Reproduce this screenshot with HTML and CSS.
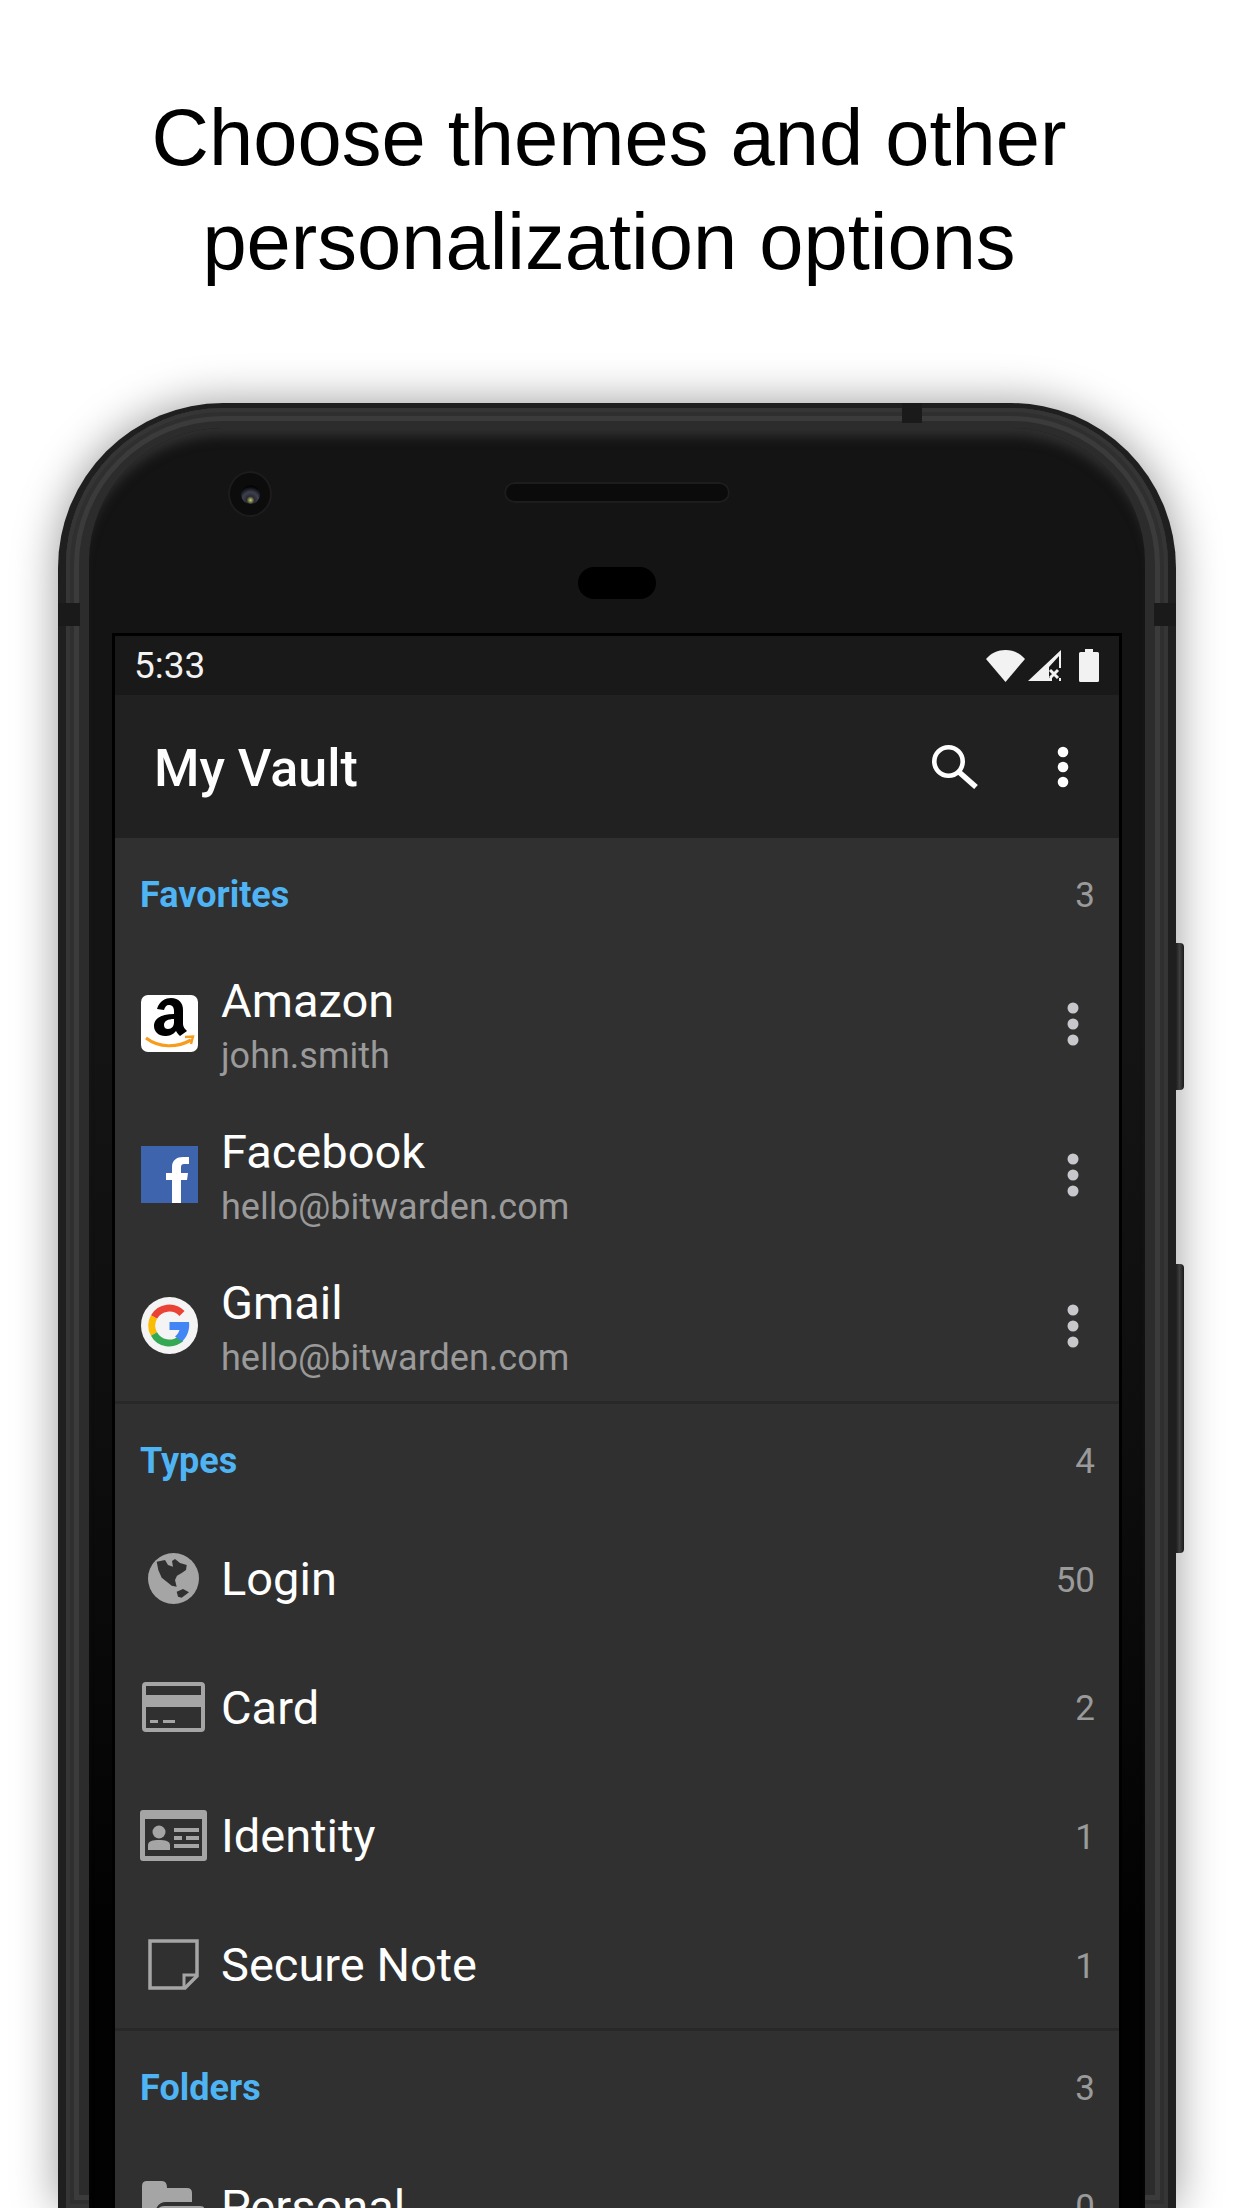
FILE: index.html
```html
<!DOCTYPE html>
<html lang="en">

<head>
    <meta charset="UTF-8">
    <title>My Vault</title>
    <link rel="stylesheet" href="styles.css">
</head>

<body>
    <h1 class="headline">Choose themes and other<br>personalization options</h1>

    <div class="phone">
        <span class="side-btn side-btn-power"></span>
        <span class="side-btn side-btn-volume"></span>
        <span class="notch notch-left"></span>
        <span class="notch notch-right"></span>
        <span class="notch notch-top"></span>
        <div class="phone-band">
            <div class="phone-face">
                <span class="camera"><span class="lens"></span></span>
                <div class="face-top">
                    <span class="speaker"></span>
                    <span class="sensor"></span>
                </div>

                <div class="screen">
                    <div class="status-bar">
                        <span class="clock">5:33</span>
                        <svg class="st-wifi" viewBox="0 0 39 32"><path d="M0 9C5 3 12 0 19.5 0S34 3 39 9L19.5 32z" fill="#f2f2f2"/></svg>
                        <svg class="st-signal" viewBox="0 0 33 31"><path d="M33 0V18H31V6L21 17V31H0z" fill="#f2f2f2"/><path d="M22 20L30 28M30 20L22 28" stroke="#f2f2f2" stroke-width="3"/><path d="M21 29.5H24M31 29.5H33" stroke="#f2f2f2" stroke-width="3"/></svg>
                        <svg class="st-battery" viewBox="0 0 20 33"><path d="M6 0H14V3H18.5Q20 3 20 4.5V31.5Q20 33 18.5 33H1.5Q0 33 0 31.5V4.5Q0 3 1.5 3H6z" fill="#f2f2f2"/></svg>
                    </div>

                    <div class="app-bar">
                        <span class="app-title">My Vault</span>
                        <svg class="search-icon" viewBox="0 0 46 44"><circle cx="16.5" cy="16.5" r="14.2" fill="none" stroke="#fff" stroke-width="4.6"/><path d="M27 27L44 42" stroke="#fff" stroke-width="5.5"/></svg>
                        <svg class="more-icon" viewBox="0 0 12 42"><circle cx="6" cy="6" r="5.3" fill="#fff"/><circle cx="6" cy="21" r="5.3" fill="#fff"/><circle cx="6" cy="36" r="5.3" fill="#fff"/></svg>
                    </div>

                    <div class="list">
                        <section class="group">
                            <div class="group-head"><span class="group-name">Favorites</span><span class="count">3</span></div>
                            <div class="cipher">
                                <svg class="site-icon" viewBox="0 0 57 57">
                                    <rect width="57" height="57" rx="7" fill="#fff"/>
                                    <path fill-rule="evenodd" d="M16 14C18 6 25 3 30 3C38 3 42 8 42 15V29C42 32 44 34 46 36L39 41C37 39 36 38 35 36C32 40 28 41 24 41C18 41 13 37 13 31C13 23 21 19 33 19V16C33 12 31 10 28 10C25 10 24 12 23 15zM33 24C27 24 23 26 23 30C23 33 25 34 27 34C31 34 33 31 33 27z" fill="#000"/>
                                    <path d="M5 43C18 53 36 53 50 45" fill="none" stroke="#f79c1d" stroke-width="3.2"/>
                                    <path d="M44 42L52 41.5L50 49" fill="none" stroke="#f79c1d" stroke-width="2.4"/>
                                </svg>
                                <div class="cipher-text"><span class="cipher-name">Amazon</span><span class="cipher-sub">john.smith</span></div>
                                <svg class="row-more" viewBox="0 0 12 44"><circle cx="6" cy="6" r="5.5"/><circle cx="6" cy="22" r="5.5"/><circle cx="6" cy="38" r="5.5"/></svg>
                            </div>
                            <div class="cipher">
                                <svg class="site-icon" viewBox="0 0 57 57">
                                    <rect width="57" height="57" fill="#3e64ae"/>
                                    <path d="M31 57V34H25V27H31V21C31 14 36 11 42 11H48V18H43C41 18 40 19 40 21V27H47L46 34H40V57z" fill="#fff"/>
                                </svg>
                                <div class="cipher-text"><span class="cipher-name">Facebook</span><span class="cipher-sub">hello@bitwarden.com</span></div>
                                <svg class="row-more" viewBox="0 0 12 44"><circle cx="6" cy="6" r="5.5"/><circle cx="6" cy="22" r="5.5"/><circle cx="6" cy="38" r="5.5"/></svg>
                            </div>
                            <div class="cipher">
                                <svg class="site-icon" viewBox="0 0 57 57">
                                    <circle cx="28.5" cy="28.5" r="28.5" fill="#f4f4f4"/>
                                    <path d="M41 16.5A17.5 17.5 0 0 0 13 20" fill="none" stroke="#ea4335" stroke-width="7"/>
                                    <path d="M13 20A17.5 17.5 0 0 0 13 37" fill="none" stroke="#fbbc05" stroke-width="7"/>
                                    <path d="M13 37A17.5 17.5 0 0 0 40 41.5" fill="none" stroke="#34a853" stroke-width="7"/>
                                    <path d="M48 25H28.5V33H38.5C37.5 36 36 38 34 39.5L41 44.5C46 40 49 33 48 25z" fill="#4285f4"/>
                                </svg>
                                <div class="cipher-text"><span class="cipher-name">Gmail</span><span class="cipher-sub">hello@bitwarden.com</span></div>
                                <svg class="row-more" viewBox="0 0 12 44"><circle cx="6" cy="6" r="5.5"/><circle cx="6" cy="22" r="5.5"/><circle cx="6" cy="38" r="5.5"/></svg>
                            </div>
                        </section>

                        <section class="group">
                            <div class="group-head"><span class="group-name">Types</span><span class="count">4</span></div>
                            <div class="type-row">
                                <div class="type-icon">
                                    <svg class="ic-globe" viewBox="0 0 51 51">
                                        <circle cx="25.5" cy="25.5" r="25.5" fill="#a5a5a5"/>
                                        <path d="M8.7 8.7L17 7L20 12L25 13.7L24 8L27 6L32 10L38.7 12L38 17L33.7 20L29 22.7L27 27L28.7 33.7L23.7 32.7L18.7 28.7L13.7 24.7L10.3 17z" fill="#303030"/>
                                        <path d="M28.7 38.7L35 36L41 39.3L33.7 44.7L30 43.7z" fill="#303030"/>
                                    </svg>
                                </div>
                                <span class="type-name">Login</span><span class="count">50</span>
                            </div>
                            <div class="type-row">
                                <div class="type-icon">
                                    <svg class="ic-card" viewBox="0 0 63 50">
                                        <path fill-rule="evenodd" d="M4 0H59Q63 0 63 4V46Q63 50 59 50H4Q0 50 0 46V4Q0 0 4 0zM4 4V13H59V4zM4 25V46H59V25z" fill="#a5a5a5"/>
                                        <path d="M8 38H16V41H8zM21 38H33V41H21z" fill="#a5a5a5"/>
                                    </svg>
                                </div>
                                <span class="type-name">Card</span><span class="count">2</span>
                            </div>
                            <div class="type-row">
                                <div class="type-icon">
                                    <svg class="ic-identity" viewBox="0 0 67 51">
                                        <path fill-rule="evenodd" d="M3 0H64Q67 0 67 3V48Q67 51 64 51H3Q0 51 0 48V3Q0 0 3 0zM5 9V46H62V9z" fill="#a5a5a5"/>
                                        <circle cx="19" cy="22" r="6.5" fill="#a5a5a5"/>
                                        <path d="M8 40V35C8 31 13 30 19 30S30 31 30 35V40z" fill="#a5a5a5"/>
                                        <path d="M34 18H59V22H34zM34 26H42V30H34zM46 26H59V30H46zM34 34H59V38H34z" fill="#a5a5a5"/>
                                    </svg>
                                </div>
                                <span class="type-name">Identity</span><span class="count">1</span>
                            </div>
                            <div class="type-row">
                                <div class="type-icon">
                                    <svg class="ic-note" viewBox="0 0 51 51">
                                        <path d="M2 2H49V37L37 49H2z" fill="none" stroke="#a5a5a5" stroke-width="3.5"/>
                                        <path d="M36 48V36H48" fill="none" stroke="#a5a5a5" stroke-width="3"/>
                                    </svg>
                                </div>
                                <span class="type-name">Secure Note</span><span class="count">1</span>
                            </div>
                        </section>

                        <section class="group">
                            <div class="group-head"><span class="group-name">Folders</span><span class="count">3</span></div>
                            <div class="type-row">
                                <div class="type-icon">
                                    <svg class="ic-folder" viewBox="0 0 62 50">
                                        <path d="M5 0H20Q25 0 25 7H45Q50 7 50 12V21H24Q18 21 15 26L9 42H4Q0 42 0 38V5Q0 0 5 0z" fill="#a5a5a5"/>
                                        <path d="M22 25H58Q62 25 62 27L54 46Q53 50 49 50H8Q4 50 6 46L14 30Q17 25 22 25z" fill="#a5a5a5"/>
                                    </svg>
                                </div>
                                <span class="type-name">Personal</span><span class="count">0</span>
                            </div>
                        </section>
                    </div>
                </div>
            </div>
        </div>
    </div>
</body>

</html>
```

FILE: styles.css
```css
html,
body {
    margin: 0;
    padding: 0;
    height: 2208px;
    overflow: hidden;
    background: #fff;
}

body {
    font-family: Roboto, "Noto Sans", sans-serif;
}

.headline {
    margin: 0;
    height: 403px;
    padding: 86px 24px 0 0;
    box-sizing: border-box;
    font-family: "Liberation Sans", Arial, sans-serif;
    font-size: 79.5px;
    font-weight: 400;
    line-height: 104px;
    text-align: center;
    color: #000;
}

/* phone body */
.phone {
    position: relative;
    width: 1118px;
    height: 1805px;
    margin-left: 58px;
    padding: 5px 8px 0;
    box-sizing: border-box;
    border-radius: 165px 165px 0 0;
    background: #1f1f1f;
    box-shadow: 0 0 45px rgba(0, 0, 0, 0.4);
}

.phone-band {
    height: 100%;
    padding: 20px 23px 0;
    box-sizing: border-box;
    border-radius: 157px 157px 0 0;
    background: #2c2c2c;
    box-shadow: inset 0 0 0 4px #353535, inset 0 0 0 8px #2f2f2f, inset 0 0 0 13px #3b3b3b;
}

.phone-face {
    position: relative;
    height: 100%;
    display: flex;
    flex-direction: column;
    border-radius: 134px 134px 0 0;
    background: linear-gradient(#141414 600px, #0e0e0e 1000px, #020202 1500px);
    box-shadow: inset 0 16px 12px -8px #303030;
}

.side-btn {
    position: absolute;
    right: -8px;
    width: 8px;
    background: linear-gradient(90deg, #1f1f1f, #3f3f3f 45%, #1a1a1a);
    border-radius: 0 4px 4px 0;
}

.side-btn-power {
    top: 540px;
    height: 147px;
}

.side-btn-volume {
    top: 861px;
    height: 289px;
}

.notch {
    position: absolute;
    background: #1a1a1a;
}

.notch-left {
    left: 0;
    top: 200px;
    width: 22px;
    height: 23px;
}

.notch-right {
    right: 0;
    top: 200px;
    width: 22px;
    height: 23px;
}

.notch-top {
    left: 844px;
    top: 0;
    width: 20px;
    height: 20px;
}

.camera {
    position: absolute;
    left: 141px;
    top: 45px;
    width: 40px;
    height: 42px;
    border-radius: 50%;
    background: #0c0c0c;
    box-shadow: 0 0 0 2px #1c1c1c;
    display: flex;
    align-items: center;
    justify-content: center;
}

.lens {
    width: 19px;
    height: 19px;
    border-radius: 50%;
    background: radial-gradient(circle at 50% 80%, #c9cf6a 0, #2a2a30 22%, #3d4050 45%, #050505 75%);
}

.face-top {
    height: 205px;
    flex: none;
    padding-top: 54px;
    box-sizing: border-box;
    display: flex;
    flex-direction: column;
    align-items: center;
}

.speaker {
    width: 226px;
    height: 21px;
    box-sizing: border-box;
    border-radius: 11px;
    background: #0b0b0b;
    box-shadow: inset 0 0 0 2px #1d1d1d;
}

.sensor {
    width: 78px;
    height: 32px;
    margin-top: 64px;
    border-radius: 16px;
    background: #000;
}

/* app screen */
.screen {
    flex: 1;
    min-height: 0;
    margin: 0 23px;
    overflow: hidden;
    border: 3px solid #000;
    border-bottom: 0;
    background: #303030;
}

.status-bar {
    height: 59px;
    padding: 0 20px 0 19px;
    display: flex;
    align-items: center;
    background: #191919;
}

.clock {
    flex: 1;
    font-size: 37px;
    color: #f2f2f2;
}

.st-wifi {
    width: 39px;
    height: 32px;
}

.st-signal {
    width: 33px;
    height: 31px;
    margin-left: 3px;
}

.st-battery {
    width: 20px;
    height: 33px;
    margin-left: 18px;
}

.app-bar {
    height: 143px;
    padding: 0 50px 0 39px;
    display: flex;
    align-items: center;
    background: #212121;
}

.app-title {
    flex: 1;
    padding-top: 4px;
    font-size: 52px;
    font-weight: 500;
    color: #fff;
}

.search-icon {
    width: 46px;
    height: 44px;
}

.more-icon {
    width: 12px;
    height: 42px;
    margin-left: 79px;
}

.group {
    border-bottom: 3px solid #282828;
}

.group-head {
    height: 110px;
    padding: 4px 24px 0 25px;
    box-sizing: border-box;
    display: flex;
    align-items: center;
    justify-content: space-between;
}

.group-name {
    font-size: 36px;
    font-weight: 700;
    color: #4fb4f4;
}

.count {
    font-size: 35px;
    color: #9a9a9a;
}

.cipher {
    height: 151px;
    padding: 0 25px 0 26px;
    display: flex;
    align-items: center;
}

.site-icon {
    width: 57px;
    height: 57px;
    flex: none;
}

.cipher-text {
    flex: 1;
    margin-left: 23px;
    padding-top: 8px;
    display: flex;
    flex-direction: column;
}

.cipher-name {
    font-size: 47px;
    line-height: 56px;
    color: #fff;
}

.cipher-sub {
    font-size: 36px;
    line-height: 54px;
    color: #9a9a9a;
}

.row-more {
    width: 12px;
    height: 44px;
    margin-right: 15px;
    fill: #c8c8cc;
}

.type-row {
    height: 128.6px;
    padding: 0 24px 0 23px;
    display: flex;
    align-items: center;
}

.type-row .count {
    padding-top: 4px;
}

.type-icon {
    width: 70px;
    margin-right: 13px;
    display: flex;
    justify-content: center;
    flex: none;
}

.type-name {
    flex: 1;
    padding-top: 1px;
    font-size: 47px;
    color: #fff;
}

.ic-globe,
.ic-note {
    width: 51px;
    height: 51px;
}

.ic-card {
    width: 63px;
    height: 50px;
}

.ic-identity {
    width: 67px;
    height: 51px;
}

.ic-folder {
    width: 62px;
    height: 50px;
}
```
